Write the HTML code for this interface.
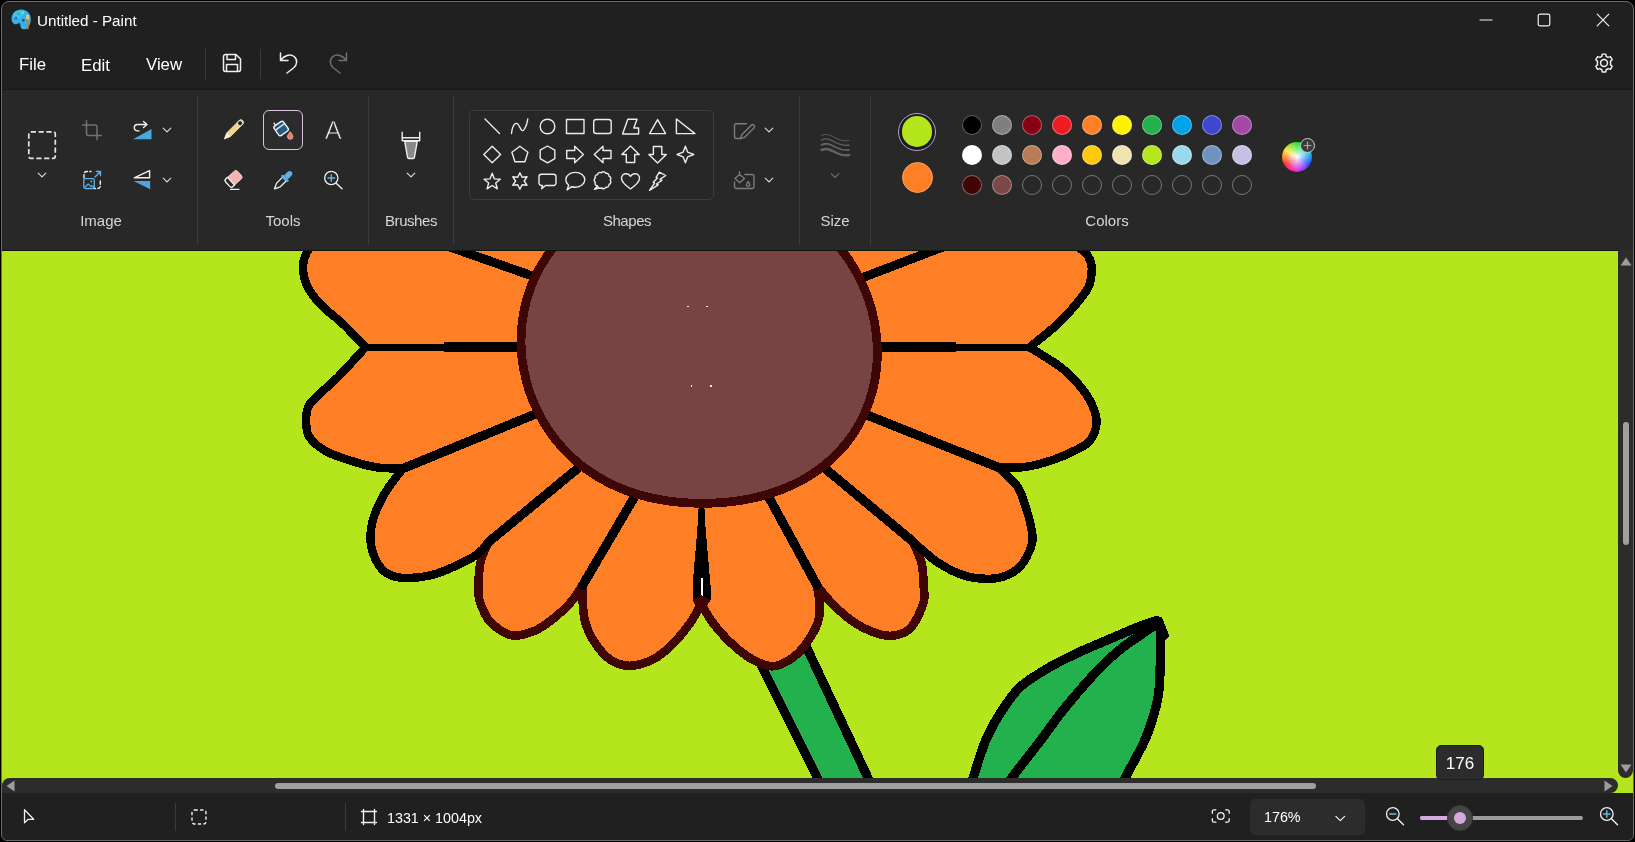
<!DOCTYPE html>
<html lang="en">
<head>
<meta charset="utf-8">
<title>Untitled - Paint</title>
<style>
*{box-sizing:border-box;margin:0;padding:0}
html,body{width:1635px;height:842px;overflow:hidden;background:#000}
body{font-family:"Liberation Sans",sans-serif;color:#fff;position:relative}
#frame{position:absolute;left:1px;top:1px;width:1633px;height:840px;background:#202020;border:1px solid #6a6a6a;border-radius:8px 8px 6px 6px}
#ribbon{position:absolute;left:2px;top:90px;width:1631px;height:160px;background:#282828}
#canvas{position:absolute;left:2px;top:250px;width:1631px;height:543px;background:#b5e61d;overflow:hidden}
#status{position:absolute;left:2px;top:793px;width:1631px;height:47px;background:#202020;border-radius:0 0 6px 6px}
.t{position:absolute;white-space:nowrap;line-height:1;will-change:transform}
.sep{position:absolute;width:1px;background:#3b3b3b}
.lbl{position:absolute;font-size:15px;color:#d6d6d6;white-space:nowrap;line-height:1;transform:translateX(-50%);top:213px;will-change:transform}
svg{position:absolute;overflow:visible}
.ic{fill:none;stroke:#f0f0f0;stroke-width:1.3;stroke-linecap:round;stroke-linejoin:round}
.sw{position:absolute;width:20px;height:20px;border-radius:50%;border:1.2px solid rgba(255,255,255,.36)}
</style>
</head>
<body>
<div id="frame"></div>
<!-- TITLE BAR -->
<svg width="23.5" height="23.5" viewBox="0 0 22 22" style="left:9.8px;top:8.2px">
  <path fill="#35b2ea" d="M10.5 1.5C5 1.5 1.5 5.5 1.5 10c0 3 1.8 5.2 4 5.2 1.6 0 2-1.2 3-1.2 1.3 0 1.2 2.3 1.4 3.5.300 1.6 1.7 2.5 3.3 2.5 3.6 0 6.3-4.5 6.3-9.5S16 1.5 10.5 1.5z"/>
  <ellipse cx="7.5" cy="6.5" rx="5" ry="3.6" fill="#4fd0d8" opacity=".55" transform="rotate(-30 7.5 6.5)"/><circle cx="5.5" cy="9.5" r="1.5" fill="#3a6fd8"/><circle cx="8" cy="5.5" r="1.4" fill="#2fb58a"/><circle cx="12" cy="4.3" r="1.3" fill="#7fe0c0"/><circle cx="12.5" cy="11.5" r="1.2" fill="#134a9a"/>
  <path d="M15.3 6.5h2.4l-.3 13.5h-1.8z" fill="#b98238"/><path d="M15.3 6.5h2.4v4h-2.4z" fill="#e8c9a0"/>
</svg>
<div class="t" style="left:36.5px;top:12.5px;font-size:15.2px;color:#fff">Untitled - Paint</div>
<svg width="14" height="14" viewBox="0 0 14 14" style="left:1479px;top:13px"><path class="ic" style="stroke-width:1.2" d="M1 7h12"/></svg>
<svg width="14" height="14" viewBox="0 0 14 14" style="left:1537px;top:13px"><rect class="ic" style="stroke-width:1.2" x="1.2" y="1.2" width="11.6" height="11.6" rx="1.8"/></svg>
<svg width="14" height="14" viewBox="0 0 14 14" style="left:1596px;top:13px"><path class="ic" style="stroke-width:1.2" d="M1.2 1.2l11.6 11.6M12.8 1.2L1.2 12.8"/></svg>

<!-- MENU BAR -->
<div class="t" style="left:19px;top:57px;font-size:16.8px">File</div>
<div class="t" style="left:81px;top:58px;font-size:16.8px">Edit</div>
<div class="t" style="left:146px;top:57px;font-size:16.8px">View</div>
<div class="sep" style="left:204.5px;top:49px;height:30px"></div>
<svg width="20" height="20" viewBox="0 0 20 20" style="left:222px;top:53px"><path class="ic" style="stroke-width:1.5" d="M3.5 1.5h10.5l4.5 4.5v10.5a2 2 0 0 1-2 2h-13a2 2 0 0 1-2-2v-13a2 2 0 0 1 2-2zM5 1.5v5h8.5v-5M4.5 18.5v-7h11v7"/></svg>
<div class="sep" style="left:260px;top:49px;height:30px"></div>
<svg width="20" height="22" viewBox="0 0 20 22" style="left:279px;top:52px"><path class="ic" style="stroke-width:1.5" d="M1.5 1v7.5h7.5M1.8 8.2C5 3.5 11 1.5 15 4.5c4 3 3.2 8.5-.5 11.5L8 21"/></svg>
<svg width="20" height="22" viewBox="0 0 20 22" style="left:328px;top:52px"><path class="ic" style="stroke:#6f6f6f;stroke-width:1.5" d="M18.5 1v7.5H11M18.2 8.2C15 3.5 9 1.5 5 4.5c-4 3-3.2 8.5.5 11.5L12 21"/></svg>
<svg width="22" height="22" viewBox="0 0 24 24" style="left:1592.5px;top:52px"><path class="ic" style="stroke-width:1.6" d="M12 8.2a3.8 3.8 0 1 0 0 7.6 3.8 3.8 0 0 0 0-7.6z"/><path class="ic" style="stroke-width:1.6" d="M10.1 2.3l-.6 2.6c-.7.2-1.4.6-2 1L5 5.1 3.1 8.4l1.9 1.8c-.1.6-.2 1.2-.2 1.8s.1 1.2.2 1.8L3.1 15.6 5 18.9l2.5-.8c.6.4 1.3.8 2 1l.6 2.6h3.8l.6-2.6c.7-.2 1.4-.6 2-1l2.5.8 1.9-3.3-1.9-1.8c.1-.6.2-1.2.2-1.8s-.1-1.2-.2-1.8l1.9-1.8L19 5.1l-2.5.8c-.6-.4-1.3-.8-2-1l-.6-2.6z"/></svg>
<!-- RIBBON -->
<div id="ribbon"></div>
<div id="rline" style="position:absolute;left:2px;top:89px;width:1631px;height:1px;background:#1a1a1a"></div>
<div class="sep" style="left:197px;top:96px;height:149px"></div>
<div class="sep" style="left:368px;top:96px;height:149px"></div>
<div class="sep" style="left:453px;top:96px;height:149px"></div>
<div class="sep" style="left:799px;top:96px;height:149px"></div>
<div class="sep" style="left:870px;top:96px;height:149px"></div>
<div class="lbl" style="left:101px">Image</div>
<div class="lbl" style="left:283px">Tools</div>
<div class="lbl" style="left:410.5px;letter-spacing:-.45px">Brushes</div>
<div class="lbl" style="left:627px;letter-spacing:-.45px">Shapes</div>
<div class="lbl" style="left:835px">Size</div>
<div class="lbl" style="left:1107px">Colors</div>
<!-- selected tool box + shapes gallery box -->
<div style="position:absolute;left:263px;top:110px;width:40px;height:40px;border:1px solid #d8c4dc;border-radius:6px;background:#2d2b2e"></div>
<div style="position:absolute;left:469px;top:110px;width:245px;height:90px;border:1px solid #3e3e3e;border-radius:5px;background:#272727"></div>

<svg width="1635" height="260" viewBox="0 0 1635 260" style="left:0;top:0">
<!-- chevrons -->
<g class="ic" style="stroke:#d8d8d8;stroke-width:1.2">
  <path d="M-3.8 -1.9L0 1.9L3.8 -1.9" transform="translate(42 175)"/><path d="M-3.8 -1.9L0 1.9L3.8 -1.9" transform="translate(167 130)"/><path d="M-3.8 -1.9L0 1.9L3.8 -1.9" transform="translate(167 180)"/>
  <path d="M-3.8 -1.9L0 1.9L3.8 -1.9" transform="translate(411 175)"/><path d="M-3.8 -1.9L0 1.9L3.8 -1.9" transform="translate(769 130)"/><path d="M-3.8 -1.9L0 1.9L3.8 -1.9" transform="translate(769 180)"/>
</g>
<path d="M-3.8 -1.9L0 1.9L3.8 -1.9" transform="translate(835 175.5)" class="ic" style="stroke:#6e6e6e;stroke-width:1.2"/>

<!-- IMAGE group -->
<rect x="28.8" y="131.8" width="26.5" height="26.5" rx="2" class="ic" style="stroke:#e4e4e4;stroke-width:1.7;stroke-dasharray:5.2 2.6;stroke-linecap:butt"/>
<path class="ic" style="stroke:#727272;stroke-width:1.5" d="M86.5 120.8V133.5a2 2 0 0 0 2 2H101.3M82.7 125H95a2 2 0 0 1 2 2V139.5"/>
<path d="M133 139.2L151.5 129V139.2Z" fill="#4aa8dc"/>
<path class="ic" style="stroke-width:1.4" d="M143.5 121.5L147 124.5L143.5 127.5M146.5 124.5H137.5a3.2 3.2 0 0 0 0 6.4h1.5"/>
<g class="ic" style="stroke-width:1.4"><path stroke-dasharray="3.2 2.4" d="M84 178v-4a2.5 2.5 0 0 1 2.5-2.5H91M100.3 181v5a2.5 2.5 0 0 1-2.5 2.5h-4"/></g>
<rect x="83.8" y="178.7" width="10.5" height="9.8" rx="1.8" class="ic" style="stroke:#5fb4e4;stroke-width:1.3"/>
<path class="ic" style="stroke:#5fb4e4;stroke-width:1.1" d="M85 187l3.2-3 2.8 2.6 1.3-1.1 1.7 1.6"/><circle cx="91.3" cy="181.5" r="0.9" fill="#5fb4e4"/>
<path class="ic" style="stroke:#5fb4e4;stroke-width:1.3" d="M95 177l5.3-5.3M96.3 171.5h4.2v4.2"/>
<path class="ic" style="stroke-width:1.4" d="M134.2 177.8L149.6 170.7V177.8Z"/>
<path d="M133.5 181L150.2 181V189.2Z" fill="#4aa8dc"/>

<!-- TOOLS -->
<g transform="translate(233.3 130) rotate(45)">
  <path d="M-2.6 -10.8a2.6 2.6 0 0 1 5.2 0V6.5L0 12.8L-2.6 6.5Z" fill="#f0d488" stroke="#f5e6b8" stroke-width="0.7"/>
  <path d="M-2.6 6.5L0 12.8L2.6 6.5Z" fill="#f7f2e6"/>
  <path d="M-2.6 -9.6a2.6 2.6 0 0 1 5.2 0a2.6 2.6 0 0 1 -5.2 0z" fill="#282828" stroke="#f4f4f4" stroke-width="0.9"/>
</g>
<!-- fill bucket -->
<g transform="translate(280.5 128) rotate(-35)">
  <rect x="-5.5" y="-5" width="11.5" height="11.5" rx="2" fill="#2a5a7c" stroke="#e8f2f8" stroke-width="1.4"/>
  <path d="M-5.5 -1.2h11.5" stroke="#e8f2f8" stroke-width="1.3"/>
  <path d="M-2.5 -5v-3.2" stroke="#e8f2f8" stroke-width="1.3"/>
</g>
<path d="M290.2 131.8c1.5 2 2.7 3.4 2.7 4.8a2.7 2.7 0 0 1-5.4 0c0-1.4 1.2-2.8 2.7-4.8z" fill="#e9825a" stroke="#f3c3b0" stroke-width="0.8"/>
<!-- text tool -->
<text x="333.2" y="139.3" font-size="25.5" text-anchor="middle" fill="#ededed" stroke="#282828" stroke-width=".75" font-family="Liberation Sans, sans-serif">A</text>
<!-- eraser -->
<g transform="translate(234 178.5) rotate(-42)">
  <rect x="-8.5" y="-5.2" width="16" height="10.4" rx="2.3" fill="#f4b2b4" stroke="#f8d6d6" stroke-width="0.9"/>
  <path d="M-8.5 -3v6a2.3 2.3 0 0 0 2.3 2.2h2.2v-10.4h-2.2a2.3 2.3 0 0 0-2.3 2.2z" fill="#2a2a2a" stroke="#f2f2f2" stroke-width="1.3"/>
</g>
<path class="ic" style="stroke-width:1.3" d="M230.5 189.3h8.5"/>
<!-- eyedropper -->
<g transform="translate(283.4 180) rotate(45)">
  <path d="M-2.6 -1.5h5.2v8.5l-2.6 5.5l-2.6-5.5z" fill="#2a2a2a" stroke="#f0f0f0" stroke-width="1.3" stroke-linejoin="round"/>
  <rect x="-4.6" y="-3.6" width="9.2" height="2.8" rx="1.3" fill="#58b2e2"/>
  <path d="M-2.7 -3.6v-5.2a2.7 2.7 0 0 1 5.4 0v5.2z" fill="#58b2e2"/>
</g>
<!-- magnifier -->
<circle cx="331.3" cy="178" r="6.6" class="ic" style="stroke-width:1.3"/>
<path class="ic" style="stroke-width:1.4" d="M336.2 183.2l5.8 5.6"/>
<path class="ic" style="stroke:#5fb4e4;stroke-width:1.4" d="M328 178h6.6M331.3 174.7v6.6"/>

<!-- BRUSHES -->
<path class="ic" style="stroke-width:1.4" d="M402.2 132.3v8.4h17.5v-8.4M402.2 137.8h17.5"/>
<path d="M404.7 141.2h12.6l-2.9 16.3a1.2 1.2 0 0 1-1.2 1h-4.4a1.2 1.2 0 0 1-1.2-1z" fill="#898989" stroke="#f0f0f0" stroke-width="1.4" stroke-linejoin="round"/>

<!-- SHAPES -->
<g class="ic" style="stroke:#ececec;stroke-width:1.4">
  <path d="M485 119l14.5 14.5"/>
  <path d="M511.5 133.5c1-9 4.5-12.5 7-8.5s3.5 8 6 4 3-7.5 3.3-10"/>
  <circle cx="547.5" cy="126.5" r="7.3"/>
  <rect x="566.5" y="119.5" width="17.5" height="14"/>
  <rect x="593.7" y="119.5" width="17.5" height="14" rx="2.5"/>
  <path d="M627.8 119.2h9.2l-3.2 8.8h4.8v6h-16z"/>
  <path d="M657.6 119.6l8 14h-16z"/>
  <path d="M676.4 119v14.6h18.6z"/>
  <path d="M492.2 146.2l8.4 8.3-8.4 8.3-8.4-8.3z"/>
  <path d="M519.9 146.3l8 5.9-3 9.5h-10l-3-9.5z"/>
  <path d="M547.5 146l7.3 4.2v8.5l-7.3 4.2-7.3-4.2v-8.5z"/>
  <path d="M566.7 150.5h8v-4.3l8.7 8.3-8.7 8.3v-4.3h-8z"/>
  <path d="M611 150.5h-8v-4.3l-8.7 8.3 8.7 8.3v-4.3h8z"/>
  <path d="M630.5 146l8.7 8.5h-4.5v8h-8.4v-8h-4.5z"/>
  <path d="M657.6 163l8.7-8.5h-4.5v-8h-8.4v8h-4.5z"/>
  <path d="M685.4 146.2l2.3 6 6 2.3-6 2.3-2.3 6-2.3-6-6-2.3 6-2.3z"/>
  <path d="M492.2 173.3l2.2 5.6 5.9.3-4.6 3.8 1.6 5.8-5.1-3.3-5.1 3.3 1.6-5.8-4.6-3.8 5.9-.3z"/>
  <path d="M519.9 172.8l2.2 4.5 4.9-.5-2.8 4.2 2.8 4.2-4.9-.5-2.2 4.5-2.2-4.5-4.9.5 2.8-4.2-2.8-4.2 4.9.5z"/>
  <path d="M541.5 174.2h12a2.5 2.5 0 0 1 2.5 2.5v6.3a2.5 2.5 0 0 1-2.5 2.5h-8l-3.8 3.3.8-3.3h-1a2.5 2.5 0 0 1-2.5-2.5v-6.3a2.5 2.5 0 0 1 2.5-2.5z"/>
  <path d="M575.3 172.4c5.3 0 9.5 3.3 9.5 7.4s-4.2 7.4-9.5 7.4c-1.3 0-2.5-.200-3.6-.500l-4.7 3.2 1.7-4.6c-1.8-1.4-2.9-3.3-2.9-5.5 0-4.1 4.2-7.4 9.5-7.4z"/>
  <path d="M610.2 180.3 A2.5 2.5 0 0 1 609 184.4 A2.5 2.5 0 0 1 605.8 187.2 A2.5 2.5 0 0 1 601.5 187.8 A2.5 2.5 0 0 1 597.6 186 A2.5 2.5 0 0 1 595.3 182.4 A2.5 2.5 0 0 1 595.3 178.2 A2.5 2.5 0 0 1 597.6 174.6 A2.5 2.5 0 0 1 601.5 172.8 A2.5 2.5 0 0 1 605.8 173.4 A2.5 2.5 0 0 1 609 176.2 A2.5 2.5 0 0 1 610.2 180.3Z"/><path d="M597.3 186.3l-2.8 3 4.3-1.3"/>
  <path d="M630.5 189c-6-4.2-9-7.3-9-10.7 0-2.6 2-4.5 4.5-4.5 1.9 0 3.5 1 4.5 2.7 1-1.7 2.6-2.7 4.5-2.7 2.5 0 4.5 1.9 4.5 4.5 0 3.4-3 6.5-9 10.7z"/>
  <path d="M659.3 172.2 L656.1 177.3 L657.4 177.9 L653.3 182.3 L654.6 183.1 L649.5 190.4 L658.2 184.8 L656.5 184 L661.9 180.4 L660 179.3 L665.7 175.5Z"/>
</g>
<!-- outline / fill dropdown icons -->
<g class="ic" style="stroke:#7c7c7c;stroke-width:1.4">
  <path d="M746.5 123.7h-10a2 2 0 0 0-2 2v10.8a2 2 0 0 0 2 2h3.5"/>
  <path d="M751.3 125.2a1.9 1.9 0 0 1 2.7 2.7l-9.5 9.5-4 1.3 1.3-4z"/>
  <path d="M745 174.5h7a2 2 0 0 1 2 2v10a2 2 0 0 1-2 2h-15.5a2 2 0 0 1-2-2v-4.5"/>
  <path d="M739.5 171.8v3.5M735 178.5l4.5-4 5 4-4.7 4.3z"/>
  <path d="M748.2 181.5c1.1 1.5 1.7 2.3 1.7 3.2a1.7 1.7 0 0 1-3.4 0c0-.9.6-1.7 1.7-3.2z"/>
</g>
<!-- size -->
<g class="ic" style="stroke:#626262">
  <path stroke-width="0.9" d="M821.5 135.5c6-2.5 9 0 14 2.5s9 3.5 13.5 2.5"/>
  <path stroke-width="1.3" d="M821.5 140c6-2.5 9 0 14 2.5s9 3.5 13.5 2.5"/>
  <path stroke-width="1.8" d="M821.5 144.8c6-2.5 9 0 14 2.5s9 3.5 13.5 2.5"/>
  <path stroke-width="2.5" d="M821.5 150c6-2.5 9 0 14 2.5s9 3.5 13.5 2.5"/>
</g>
</svg>
<!-- COLORS -->
<div style="position:absolute;left:898px;top:112.5px;width:38px;height:38px;border-radius:50%;border:1.6px solid #b89cd6;background:#1c1c1c"></div>
<div style="position:absolute;left:901.8px;top:116.3px;width:30.4px;height:30.4px;border-radius:50%;background:#b5e61d"></div>
<div style="position:absolute;left:901.5px;top:161.5px;width:31px;height:31px;border-radius:50%;background:#ff7f27;border:1px solid #ffa060"></div>
<div class="sw" style="left:962px;top:115px;background:#000000"></div>
<div class="sw" style="left:992px;top:115px;background:#7f7f7f"></div>
<div class="sw" style="left:1022px;top:115px;background:#880015"></div>
<div class="sw" style="left:1052px;top:115px;background:#ed1c24"></div>
<div class="sw" style="left:1082px;top:115px;background:#ff7f27"></div>
<div class="sw" style="left:1112px;top:115px;background:#fff200"></div>
<div class="sw" style="left:1142px;top:115px;background:#22b14c"></div>
<div class="sw" style="left:1172px;top:115px;background:#00a2e8"></div>
<div class="sw" style="left:1202px;top:115px;background:#3f48cc"></div>
<div class="sw" style="left:1232px;top:115px;background:#a349a4"></div>
<div class="sw" style="left:962px;top:145px;background:#ffffff"></div>
<div class="sw" style="left:992px;top:145px;background:#c3c3c3"></div>
<div class="sw" style="left:1022px;top:145px;background:#b97a57"></div>
<div class="sw" style="left:1052px;top:145px;background:#ffaec9"></div>
<div class="sw" style="left:1082px;top:145px;background:#ffc90e"></div>
<div class="sw" style="left:1112px;top:145px;background:#efe4b0"></div>
<div class="sw" style="left:1142px;top:145px;background:#b5e61d"></div>
<div class="sw" style="left:1172px;top:145px;background:#99d9ea"></div>
<div class="sw" style="left:1202px;top:145px;background:#7092be"></div>
<div class="sw" style="left:1232px;top:145px;background:#c8bfe7"></div>
<div class="sw" style="left:962px;top:175px;background:#400606"></div>
<div class="sw" style="left:992px;top:175px;background:#7c4848"></div>
<div class="sw" style="left:1022px;top:175px"></div>
<div class="sw" style="left:1052px;top:175px"></div>
<div class="sw" style="left:1082px;top:175px"></div>
<div class="sw" style="left:1112px;top:175px"></div>
<div class="sw" style="left:1142px;top:175px"></div>
<div class="sw" style="left:1172px;top:175px"></div>
<div class="sw" style="left:1202px;top:175px"></div>
<div class="sw" style="left:1232px;top:175px"></div>
<div style="position:absolute;left:1281.5px;top:142px;width:30px;height:30px;border-radius:50%;background:radial-gradient(circle,#fff 0%,rgba(255,255,255,.6) 25%,rgba(255,255,255,0) 70%),conic-gradient(from 0deg,#20e020,#00e0e0 60deg,#2040ff 120deg,#e020e0 180deg,#ff2020 240deg,#ffe020 300deg,#20e020)"></div>
<div style="position:absolute;left:1300px;top:138px;width:15px;height:15px;border-radius:50%;background:#3a3a3a;border:1.3px solid #cfcfcf"></div>
<svg width="15" height="15" viewBox="0 0 15 15" style="left:1300px;top:138px"><path d="M3.5 7.5h8M7.5 3.5v8" stroke="#a8a8a8" stroke-width="1.2" fill="none"/></svg>
<!-- CANVAS -->
<div id="canvas">
<svg id="art" width="1631" height="543" viewBox="2 250 1631 543" style="left:0;top:0" shape-rendering="crispEdges">
<path fill="#22b14c" d="M757 655 L806 646 L873.7 790 L823.5 790 Z"/>
<g fill="none" stroke="#000" stroke-width="9.2" stroke-linecap="butt">
<path d="M754.5 652 L823.5 790"/>
<path d="M805.9 646 L873.7 790"/>
</g>
<path fill="#ff7f27" d="M335.0 236.0 C331.8 237.2 320.8 240.2 316.0 243.0 C311.2 245.8 308.7 248.8 306.5 253.0 C304.3 257.2 302.8 262.3 303.0 268.0 C303.2 273.7 304.6 280.8 307.7 287.0 C310.8 293.2 315.5 299.1 321.3 305.2 C327.1 311.3 335.1 316.6 342.5 323.6 C349.9 330.6 361.7 343.4 365.5 347.3 C360.9 352.2 345.3 369.6 338.0 377.0 C330.7 384.4 326.5 387.4 321.7 392.0 C316.9 396.6 311.9 400.4 309.3 404.7 C306.7 409.0 306.3 412.4 306.2 417.6 C306.1 422.8 305.7 430.5 308.8 436.0 C311.9 441.5 318.1 446.6 325.0 450.7 C331.9 454.8 341.2 457.7 350.0 460.5 C358.8 463.3 368.8 466.2 377.6 467.5 C386.4 468.8 398.8 468.3 403.0 468.5 C400.7 471.6 393.1 480.7 389.0 486.8 C384.9 492.9 381.3 499.1 378.5 505.2 C375.7 511.3 373.3 517.5 372.0 523.6 C370.7 529.7 369.9 535.9 370.6 542.0 C371.3 548.1 373.3 555.2 376.0 560.4 C378.7 565.6 381.9 570.4 386.8 573.3 C391.7 576.2 397.5 577.8 405.2 578.0 C412.9 578.2 423.6 577.2 432.8 574.8 C442.0 572.4 452.7 567.3 460.4 563.7 C468.1 560.1 474.2 556.5 478.8 553.0 C483.4 549.5 486.5 544.2 488.0 542.5 C486.8 545.5 482.6 554.4 481.0 560.4 C479.4 566.4 479.0 573.0 478.6 578.8 C478.2 584.6 478.2 590.6 478.6 595.0 C479.0 599.4 479.0 600.5 481.0 605.0 C483.0 609.5 485.3 617.0 490.4 622.0 C495.5 627.0 504.3 633.8 511.5 635.3 C518.7 636.8 526.9 633.8 533.6 631.2 C540.4 628.6 545.9 624.5 552.0 619.8 C558.1 615.0 565.3 608.4 570.4 602.7 C575.5 597.0 580.5 588.4 582.5 585.5 C582.5 588.5 582.3 597.5 582.8 603.6 C583.2 609.7 583.4 615.9 585.2 622.0 C587.0 628.1 589.4 634.3 593.4 640.4 C597.4 646.5 603.0 654.6 609.0 658.8 C615.0 663.0 621.9 665.7 629.3 665.8 C636.7 665.9 646.2 662.7 653.3 659.2 C660.4 655.7 665.6 651.0 671.7 645.0 C677.8 639.0 685.1 630.2 690.0 623.3 C694.9 616.4 699.4 606.8 701.3 603.5 C703.1 606.6 707.7 615.9 712.2 622.0 C716.7 628.1 721.9 634.4 728.2 640.4 C734.5 646.4 742.7 653.7 750.0 658.0 C757.3 662.3 765.3 666.1 772.0 666.3 C778.7 666.5 784.9 662.8 790.4 659.2 C795.9 655.7 800.6 651.2 805.2 645.0 C809.8 638.8 815.6 628.9 818.0 622.0 C820.4 615.1 819.7 609.7 819.5 603.6 C819.3 597.5 817.4 588.5 817.0 585.5 C819.5 588.5 826.1 597.5 832.2 603.6 C838.3 609.7 846.5 617.2 853.4 622.0 C860.2 626.8 866.9 629.9 873.3 632.2 C879.7 634.5 885.6 636.4 891.7 635.8 C897.8 635.2 904.7 633.9 910.0 628.5 C915.3 623.1 921.0 610.8 923.3 603.6 C925.6 596.4 923.9 592.0 923.6 585.2 C923.3 578.4 923.3 570.3 921.5 563.0 C919.7 555.7 914.2 545.1 912.8 541.5 C917.0 545.0 929.2 556.9 938.0 562.6 C946.8 568.4 956.5 573.3 965.7 576.0 C974.9 578.7 985.6 579.1 993.3 578.6 C1001.0 578.1 1006.8 575.6 1011.7 573.0 C1016.7 570.4 1019.6 568.2 1023.0 563.0 C1026.4 557.8 1031.1 548.6 1032.3 542.0 C1033.5 535.4 1031.6 529.7 1030.4 523.6 C1029.2 517.5 1027.1 511.3 1025.0 505.2 C1022.9 499.1 1022.0 493.1 1017.6 486.8 C1013.2 480.5 1001.9 470.7 998.8 467.5 C1003.2 467.4 1016.0 468.2 1025.0 467.0 C1034.0 465.8 1044.2 462.8 1052.5 460.0 C1060.8 457.2 1068.7 453.8 1075.0 450.5 C1081.3 447.2 1086.6 445.1 1090.2 440.4 C1093.8 435.6 1096.4 428.1 1096.6 422.0 C1096.8 415.9 1094.4 409.7 1091.5 403.6 C1088.6 397.5 1084.4 391.3 1079.2 385.2 C1074.0 379.1 1068.5 373.1 1060.2 366.8 C1051.9 360.5 1034.7 350.6 1029.6 347.3 C1034.4 343.4 1050.6 330.6 1058.2 323.6 C1065.8 316.6 1070.1 311.3 1075.2 305.2 C1080.3 299.1 1085.8 292.9 1088.6 286.8 C1091.3 280.7 1091.8 273.6 1091.7 268.4 C1091.6 263.2 1090.0 259.1 1087.7 255.5 C1085.4 251.9 1082.6 250.2 1078.0 247.0 C1073.4 243.8 1063.0 237.8 1060.0 236.0 Z"/>
<g fill="none" stroke="#3f0606" stroke-width="8.6" stroke-linecap="round" stroke-linejoin="round">
<path d="M488.0 542.5 C486.8 545.5 482.6 554.4 481.0 560.4 C479.4 566.4 479.0 573.0 478.6 578.8 C478.2 584.6 478.2 590.6 478.6 595.0 C479.0 599.4 479.0 600.5 481.0 605.0 C483.0 609.5 485.3 617.0 490.4 622.0 C495.5 627.0 504.3 633.8 511.5 635.3 C518.7 636.8 526.9 633.8 533.6 631.2 C540.4 628.6 545.9 624.5 552.0 619.8 C558.1 615.0 565.3 608.4 570.4 602.7 C575.5 597.0 580.5 588.4 582.5 585.5"/>
<path d="M582.5 585.5 C582.5 588.5 582.3 597.5 582.8 603.6 C583.2 609.7 583.4 615.9 585.2 622.0 C587.0 628.1 589.4 634.3 593.4 640.4 C597.4 646.5 603.0 654.6 609.0 658.8 C615.0 663.0 621.9 665.7 629.3 665.8 C636.7 665.9 646.2 662.7 653.3 659.2 C660.4 655.7 665.6 651.0 671.7 645.0 C677.8 639.0 685.1 630.2 690.0 623.3 C694.9 616.4 699.4 606.8 701.3 603.5"/>
<path d="M701.3 603.5 C703.1 606.6 707.7 615.9 712.2 622.0 C716.7 628.1 721.9 634.4 728.2 640.4 C734.5 646.4 742.7 653.7 750.0 658.0 C757.3 662.3 765.3 666.1 772.0 666.3 C778.7 666.5 784.9 662.8 790.4 659.2 C795.9 655.7 800.6 651.2 805.2 645.0 C809.8 638.8 815.6 628.9 818.0 622.0 C820.4 615.1 819.7 609.7 819.5 603.6 C819.3 597.5 817.4 588.5 817.0 585.5"/>
<path d="M817.0 585.5 C819.5 588.5 826.1 597.5 832.2 603.6 C838.3 609.7 846.5 617.2 853.4 622.0 C860.2 626.8 866.9 629.9 873.3 632.2 C879.7 634.5 885.6 636.4 891.7 635.8 C897.8 635.2 904.7 633.9 910.0 628.5 C915.3 623.1 921.0 610.8 923.3 603.6 C925.6 596.4 923.9 592.0 923.6 585.2 C923.3 578.4 923.3 570.3 921.5 563.0 C919.7 555.7 914.2 545.1 912.8 541.5"/>
</g>
<g fill="none" stroke="#000" stroke-linecap="round">
<path stroke-width="9" d="M430 240 L536.7 277.5"/>
<path stroke-width="7.4" d="M365.5 347.5 L446 347.5"/>
<path stroke-width="10.4" stroke-linecap="butt" d="M444 347 L522 347"/>
<path stroke-width="9.2" d="M403.0 468.5 L541.5 411.5"/>
<path stroke-width="9.2" d="M488.0 542.5 L581.6 465.2"/>
<path stroke-width="9.2" d="M582.5 585.5 L637.5 491.8"/>
<path stroke-width="9.2" d="M817.0 585.5 L766.9 493.7"/>
<path stroke-width="9.2" d="M912.8 541.5 L820.4 464.6"/>
<path stroke-width="9.2" d="M998.8 467.5 L860.4 412.4"/>
<path stroke-width="10.4" stroke-linecap="butt" d="M876 347 L956 347"/>
<path stroke-width="7.4" d="M954 347.5 L1031 347.5"/>
<path stroke-width="9" d="M857.4 279.6 L961 240"/>
</g>
<g fill="none" stroke="#000" stroke-width="8.4" stroke-linecap="round" stroke-linejoin="round">
<path d="M335.0 236.0 C331.8 237.2 320.8 240.2 316.0 243.0 C311.2 245.8 308.7 248.8 306.5 253.0 C304.3 257.2 302.8 262.3 303.0 268.0 C303.2 273.7 304.6 280.8 307.7 287.0 C310.8 293.2 315.5 299.1 321.3 305.2 C327.1 311.3 335.1 316.6 342.5 323.6 C349.9 330.6 361.7 343.4 365.5 347.3"/>
<path d="M365.5 347.3 C360.9 352.2 345.3 369.6 338.0 377.0 C330.7 384.4 326.5 387.4 321.7 392.0 C316.9 396.6 311.9 400.4 309.3 404.7 C306.7 409.0 306.3 412.4 306.2 417.6 C306.1 422.8 305.7 430.5 308.8 436.0 C311.9 441.5 318.1 446.6 325.0 450.7 C331.9 454.8 341.2 457.7 350.0 460.5 C358.8 463.3 368.8 466.2 377.6 467.5 C386.4 468.8 398.8 468.3 403.0 468.5"/>
<path d="M403.0 468.5 C400.7 471.6 393.1 480.7 389.0 486.8 C384.9 492.9 381.3 499.1 378.5 505.2 C375.7 511.3 373.3 517.5 372.0 523.6 C370.7 529.7 369.9 535.9 370.6 542.0 C371.3 548.1 373.3 555.2 376.0 560.4 C378.7 565.6 381.9 570.4 386.8 573.3 C391.7 576.2 397.5 577.8 405.2 578.0 C412.9 578.2 423.6 577.2 432.8 574.8 C442.0 572.4 452.7 567.3 460.4 563.7 C468.1 560.1 474.2 556.5 478.8 553.0 C483.4 549.5 486.5 544.2 488.0 542.5"/>
<path d="M912.8 541.5 C917.0 545.0 929.2 556.9 938.0 562.6 C946.8 568.4 956.5 573.3 965.7 576.0 C974.9 578.7 985.6 579.1 993.3 578.6 C1001.0 578.1 1006.8 575.6 1011.7 573.0 C1016.7 570.4 1019.6 568.2 1023.0 563.0 C1026.4 557.8 1031.1 548.6 1032.3 542.0 C1033.5 535.4 1031.6 529.7 1030.4 523.6 C1029.2 517.5 1027.1 511.3 1025.0 505.2 C1022.9 499.1 1022.0 493.1 1017.6 486.8 C1013.2 480.5 1001.9 470.7 998.8 467.5"/>
<path d="M998.8 467.5 C1003.2 467.4 1016.0 468.2 1025.0 467.0 C1034.0 465.8 1044.2 462.8 1052.5 460.0 C1060.8 457.2 1068.7 453.8 1075.0 450.5 C1081.3 447.2 1086.6 445.1 1090.2 440.4 C1093.8 435.6 1096.4 428.1 1096.6 422.0 C1096.8 415.9 1094.4 409.7 1091.5 403.6 C1088.6 397.5 1084.4 391.3 1079.2 385.2 C1074.0 379.1 1068.5 373.1 1060.2 366.8 C1051.9 360.5 1034.7 350.6 1029.6 347.3"/>
<path d="M1029.6 347.3 C1034.4 343.4 1050.6 330.6 1058.2 323.6 C1065.8 316.6 1070.1 311.3 1075.2 305.2 C1080.3 299.1 1085.8 292.9 1088.6 286.8 C1091.3 280.7 1091.8 273.6 1091.7 268.4 C1091.6 263.2 1090.0 259.1 1087.7 255.5 C1085.4 251.9 1082.6 250.2 1078.0 247.0 C1073.4 243.8 1063.0 237.8 1060.0 236.0"/>
</g>
<path fill="#000" d="M699 500 L704 500 L705.7 530 L710.5 585 L710.5 600 L692.5 600 L692.5 585 L697.3 530 Z"/>
<rect x="701" y="578" width="2" height="18" fill="#fff"/>
<path fill="#3f0606" d="M692.5 600 L701.3 595 L710.5 600 L704 610 L698 610 Z"/>
<path fill="#784343" stroke="#3f0606" stroke-width="8.8" d="M877.2 345.3 C877.5 353.0 877.3 360.9 876.5 368.6 C875.7 376.3 874.3 384.2 872.3 391.7 C870.3 399.2 867.6 406.6 864.4 413.7 C861.2 420.8 857.4 427.7 853.1 434.1 C848.8 440.5 843.9 446.6 838.6 452.2 C833.3 457.8 827.5 462.9 821.5 467.5 C815.5 472.1 809.1 476.3 802.6 479.9 C796.1 483.5 789.2 486.6 782.4 489.3 C775.6 492.0 768.6 494.1 761.7 496.0 C754.8 497.9 747.8 499.3 740.8 500.4 C733.8 501.5 726.9 502.2 720.0 502.7 C713.1 503.2 706.2 503.4 699.3 503.3 C692.4 503.2 685.5 502.9 678.6 502.2 C671.7 501.5 664.8 500.6 658.0 499.3 C651.2 498.0 644.4 496.4 637.6 494.3 C630.9 492.2 624.1 489.9 617.5 487.0 C610.9 484.1 604.4 480.8 598.2 477.0 C592.0 473.2 585.8 469.1 580.1 464.5 C574.4 459.9 568.9 454.8 563.8 449.3 C558.7 443.8 553.9 437.9 549.6 431.7 C545.3 425.5 541.4 418.9 538.0 412.1 C534.6 405.3 531.6 398.2 529.2 390.9 C526.8 383.6 524.9 376.0 523.5 368.4 C522.1 360.8 521.3 353.0 521.1 345.3 C520.9 337.6 521.2 329.7 522.2 322.0 C523.2 314.3 524.7 306.6 526.8 299.1 C528.9 291.6 531.6 284.2 534.9 277.2 C538.2 270.2 542.1 263.4 546.4 257.0 C550.7 250.7 555.6 244.7 560.8 239.1 C566.0 233.5 571.8 228.3 577.7 223.7 C583.6 219.0 590.0 214.9 596.4 211.2 C602.8 207.5 609.6 204.3 616.3 201.5 C623.0 198.7 629.9 196.4 636.8 194.4 C643.7 192.4 650.6 190.9 657.6 189.7 C664.6 188.4 671.5 187.5 678.5 186.9 C685.5 186.3 692.4 186.1 699.3 186.1 C706.2 186.1 713.2 186.4 720.1 187.1 C727.0 187.8 734.0 188.7 740.9 190.1 C747.8 191.5 754.6 193.2 761.4 195.3 C768.2 197.5 775.0 200.0 781.5 203.0 C788.0 206.0 794.5 209.4 800.6 213.3 C806.8 217.2 812.8 221.5 818.4 226.2 C824.0 230.9 829.4 236.1 834.4 241.6 C839.4 247.1 844.1 253.0 848.4 259.2 C852.6 265.4 856.5 272.0 859.9 278.8 C863.3 285.6 866.3 292.7 868.7 299.9 C871.1 307.1 873.1 314.6 874.5 322.2 C875.9 329.8 876.9 337.6 877.2 345.3 Z"/>
<rect x="687" y="306" width="2" height="1" fill="#eee"/><rect x="706" y="306" width="2" height="1" fill="#eee"/>
<rect x="691" y="385" width="1" height="2" fill="#eee"/><rect x="710" y="385" width="2" height="2" fill="#eee"/>
<path fill="#22b14c" stroke="#000" stroke-width="9.3" stroke-linejoin="round" d="M1156.8 620.5 C1153.6 621.6 1145.2 624.2 1137.6 627.2 C1130.0 630.2 1120.8 634.3 1111.4 638.3 C1102.0 642.3 1091.1 646.7 1081.0 651.4 C1070.9 656.1 1060.9 660.6 1050.8 666.5 C1040.7 672.4 1028.9 679.0 1020.5 686.7 C1012.1 694.4 1006.1 704.1 1000.4 712.9 C994.7 721.6 990.4 729.4 986.2 739.2 C982.0 749.0 977.8 763.0 975.1 771.5 C972.4 780.0 970.9 786.9 970.0 790.0 L1118.5 790.0 C1120.2 786.9 1124.2 779.7 1128.5 771.5 C1132.8 763.3 1140.3 750.4 1144.5 741.0 C1148.7 731.6 1151.3 723.5 1153.7 715.0 C1156.1 706.5 1157.9 700.8 1159.0 690.0 C1160.1 679.2 1160.3 660.7 1160.5 650.0 C1160.7 639.3 1160.1 630.0 1160.0 626.0 Z"/>
<path fill="none" stroke="#000" stroke-width="9.3" stroke-linecap="round" d="M1152.0 627.0 C1150.3 628.2 1146.7 630.7 1141.6 634.2 C1136.5 637.8 1128.2 642.9 1121.5 648.3 C1114.8 653.7 1108.0 659.8 1101.3 666.5 C1094.6 673.2 1087.8 681.0 1081.1 688.7 C1074.4 696.4 1067.5 704.5 1060.9 712.9 C1054.3 721.3 1048.9 729.4 1041.5 739.2 C1034.1 749.0 1023.0 763.0 1016.5 771.5 C1010.0 780.0 1004.8 786.9 1002.5 790.0"/>
<path fill="#000" d="M1149 621 L1157 616.500 L1162 617.500 L1169.500 636 L1163 643 Z"/>
</svg>
</div>
<!-- SCROLLBARS -->
<div id="cline" style="position:absolute;left:2px;top:250px;width:1631px;height:1px;background:#10160a"></div>
<div style="position:absolute;left:1618px;top:250px;width:15px;height:528px;background:#2c2c2c;border-radius:0 0 8px 8px"></div>
<div style="position:absolute;left:1622.5px;top:422px;width:6px;height:122.5px;background:#9f9f9f;border-radius:3px"></div>
<svg width="12" height="9" viewBox="0 0 12 9" style="left:1619.5px;top:257px"><path d="M6 .5L11.5 8.5H.5z" fill="#9d9d9d"/></svg>
<svg width="12" height="9" viewBox="0 0 12 9" style="left:1619.5px;top:764px"><path d="M6 8.5L11.5 .5H.5z" fill="#9d9d9d"/></svg>
<div style="position:absolute;left:2px;top:778px;width:1616px;height:15px;background:#2c2c2c;border-radius:8px 8px 8px 0"></div>
<div style="position:absolute;left:275px;top:783px;width:1041px;height:6px;background:#9f9f9f;border-radius:3px"></div>
<svg width="9" height="12" viewBox="0 0 9 12" style="left:6px;top:780px"><path d="M.5 6L8.5 .5v11z" fill="#9d9d9d"/></svg>
<svg width="9" height="12" viewBox="0 0 9 12" style="left:1604px;top:780px"><path d="M8.5 6L.5 .5v11z" fill="#9d9d9d"/></svg>
<!-- tooltip -->
<div style="position:absolute;left:1436px;top:745px;width:48px;height:35px;background:#2c2c2c;border:1px solid #1c1c1c;border-radius:5px"></div>
<div class="t" style="left:1459.5px;top:755px;font-size:17px;transform:translateX(-50%)">176</div>

<!-- STATUS BAR -->
<div id="status"></div>
<div class="sep" style="left:175px;top:803px;height:28px"></div>
<div class="sep" style="left:345px;top:803px;height:28px"></div>
<svg width="14" height="18" viewBox="0 0 14 18" style="left:21.5px;top:808px"><path class="ic" style="stroke-width:1.3" d="M2.5 1.8v13l3.7-3.5h5.5z"/></svg>
<svg width="18" height="18" viewBox="0 0 18 18" style="left:190px;top:808px"><rect class="ic" style="stroke-width:1.4;stroke-dasharray:3.3 2.3;stroke-linecap:butt" x="2" y="2" width="14" height="14" rx="2.5"/></svg>
<svg width="18" height="18" viewBox="0 0 18 18" style="left:360px;top:808px"><path class="ic" style="stroke-width:1.4" d="M3.5 3.5h11v11h-11zM1.5 3.5h2M14.5 3.5h2M1.5 14.5h2M14.5 14.5h2M3.5 1.5v2M14.5 1.5v2M3.5 14.5v2M14.5 14.5v2"/></svg>
<div class="t" style="left:386.5px;top:810.5px;font-size:14.3px;color:#fff">1331 × 1004px</div>
<svg width="19.5" height="16" viewBox="0 0 22 18" style="left:1210.5px;top:808px"><path class="ic" style="stroke-width:1.5" d="M5.5 2H3.5a2 2 0 0 0-2 2v2M16.5 2h2a2 2 0 0 1 2 2v2M5.5 16H3.5a2 2 0 0 1-2-2v-2M16.5 16h2a2 2 0 0 0 2-2v-2"/><circle class="ic" style="stroke-width:1.5" cx="11" cy="9" r="3.8"/></svg>
<div style="position:absolute;left:1250px;top:799px;width:115px;height:36px;background:#2c2c2c;border-radius:5px"></div>
<div class="t" style="left:1264px;top:809.5px;font-size:14.3px;color:#fff">176%</div>
<svg width="10.5" height="7" viewBox="0 0 12 8" style="left:1335.3px;top:814.5px"><path class="ic" style="stroke-width:1.4" d="M1 1.5l5 5 5-5"/></svg>
<svg width="22" height="22" viewBox="0 0 22 22" style="left:1384px;top:805px"><circle class="ic" style="stroke-width:1.3" cx="8.8" cy="9" r="6.3"/><path class="ic" style="stroke-width:1.4" d="M13.5 13.8l6 6"/><path class="ic" style="stroke:#7db6d8;stroke-width:1.6" d="M5.8 9h6"/></svg>
<div style="position:absolute;left:1420px;top:815.5px;width:163px;height:4px;border-radius:2px;background:#9d9d9d"></div>
<div style="position:absolute;left:1420px;top:815.5px;width:40px;height:4px;border-radius:2px;background:#d3a9e0"></div>
<div style="position:absolute;left:1447px;top:804.5px;width:26px;height:26px;border-radius:50%;background:#454545;border:1px solid #3a3a3a"></div>
<div style="position:absolute;left:1454px;top:811.5px;width:12px;height:12px;border-radius:50%;background:#d3a9e0"></div>
<svg width="22" height="22" viewBox="0 0 22 22" style="left:1597.5px;top:805px"><circle class="ic" style="stroke-width:1.3" cx="8.8" cy="9" r="6.3"/><path class="ic" style="stroke-width:1.4" d="M13.5 13.8l6 6"/><path class="ic" style="stroke:#5fb4e4;stroke-width:1.5" d="M5.6 9h6.4M8.8 5.8v6.4"/></svg>
</body>
</html>
